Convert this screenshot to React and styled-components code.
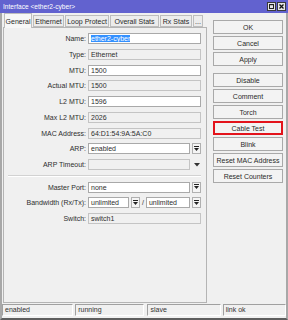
import React from 'react';
import styled, { createGlobalStyle } from 'styled-components';

const Global = createGlobalStyle`
  html, body {
    margin: 0;
    padding: 0;
    background: #f0f0f0;
  }
  body {
    font-family: 'Liberation Sans', Arial, sans-serif;
  }
`;

const Window = styled.div`
  width: 288px;
  height: 320px;
  display: flex;
  flex-direction: column;
  background: #f0f0f0;
  overflow: hidden;
`;
const TitleBar = styled.div`
  height: 13px;
  flex: none;
  background: #6262cf;
  display: flex;
  align-items: center;
  justify-content: space-between;
  padding: 0 2px 0 3px;
`;
const Title = styled.span`
  color: #fff;
  font-size: 6.6px;
`;
const WinButtons = styled.div`
  display: flex;
  gap: 1px;
`;
const WinBtn = styled.div`
  width: 9px;
  height: 9px;
  box-sizing: border-box;
  background: #e6e6e6;
  border: 1px solid #3a3a3a;
  display: flex;
  align-items: center;
  justify-content: center;
  svg {
    display: block;
  }
`;
const Frame = styled.div`
  flex: 1;
  display: flex;
  flex-direction: column;
  border-left: 2px solid #a8a8a8;
  border-right: 2px solid #a8a8a8;
  border-bottom: 2px solid #5e5e5e;
`;
const Body = styled.div`
  flex: 1;
  display: flex;
`;
const Main = styled.div`
  width: 204px;
  margin-left: 1px;
  display: flex;
  flex-direction: column;
`;
const Tabs = styled.div`
  height: 14px;
  display: flex;
  align-items: flex-end;
  gap: 1px;
  padding-left: 1px;
  position: relative;
  z-index: 1;
`;
const Tab = styled.div`
  box-sizing: border-box;
  height: ${(p) => (p.$active ? '15px' : '12px')};
  margin-bottom: ${(p) => (p.$active ? '-1px' : '0')};
  width: ${(p) => p.$w}px;
  background: ${(p) => (p.$active ? '#f7f7f7' : '#ececec')};
  border: 1px solid #bdbdbd;
  border-bottom: ${(p) => (p.$active ? 'none' : '1px solid #bdbdbd')};
  font-size: 7px;
  color: #2a2a2a;
  display: flex;
  align-items: center;
  justify-content: center;
  white-space: nowrap;
`;
const Panel = styled.div`
  flex: 1;
  box-sizing: border-box;
  border: 1px solid #b4b4b4;
  background: #f0f0f0;
  padding: 5px 5px 0 0;
`;
const Form = styled.div`
  display: grid;
  grid-template-columns: 84px 1fr;
  grid-template-rows: repeat(9, 11px) 2px repeat(3, 11px);
  row-gap: 4.75px;
`;
const Label = styled.div`
  font-size: 7px;
  color: #2e2e2e;
  text-align: right;
  padding-right: 2px;
  line-height: 11px;
  white-space: nowrap;
`;
const Field = styled.div`
  display: flex;
  align-items: center;
  gap: 2px;
  min-width: 0;
`;
const Input = styled.div`
  box-sizing: border-box;
  height: 11px;
  flex: ${(p) => (p.$w ? 'none' : '1')};
  width: ${(p) => (p.$w ? `${p.$w}px` : 'auto')};
  background: ${(p) => (p.$ro ? '#f0f0f0' : '#fff')};
  border: 1px solid ${(p) => (p.$ro ? '#c4c4c4' : '#a9a9a9')};
  font-size: 7px;
  color: #2e2e2e;
  line-height: 9px;
  padding-left: 2px;
  white-space: nowrap;
  overflow: hidden;
`;
const Selected = styled.span`
  background: #3390ff;
  color: #fff;
`;
const DropBtn = styled.div`
  box-sizing: border-box;
  flex: none;
  width: 9px;
  height: 11px;
  background: ${(p) => (p.$plain ? 'transparent' : '#f4f4f4')};
  border: 1px solid ${(p) => (p.$plain ? 'transparent' : '#b0b0b0')};
  display: flex;
  align-items: center;
  justify-content: center;
  svg {
    display: block;
  }
`;
const Slash = styled.span`
  font-size: 7px;
  color: #2e2e2e;
  flex: none;
`;
const Separator = styled.div`
  grid-column: 1 / -1;
  height: 0;
  margin-left: 4px;
  border-top: 1px solid #d2d2d2;
  border-bottom: 1px solid #fff;
`;
const Side = styled.div`
  width: 70px;
  margin-left: 6px;
  padding-top: 7px;
  display: flex;
  flex-direction: column;
  gap: 2px;
`;
const Button = styled.div`
  box-sizing: border-box;
  height: 14px;
  margin-top: ${(p) => (p.$gapBefore ? '5px' : '0')};
  background: #f3f3f3;
  border: ${(p) => (p.$highlight ? '2px solid #e3131b' : '1px solid #a9a9a9')};
  font-size: 7px;
  color: #2a2a2a;
  display: flex;
  align-items: center;
  justify-content: center;
  white-space: nowrap;
`;
const StatusBar = styled.div`
  height: 14px;
  display: flex;
  align-items: center;
  gap: 2px;
  padding-bottom: 1px;
`;
const StatusCell = styled.div`
  box-sizing: border-box;
  width: ${(p) => p.$w}px;
  height: 12px;
  border-top: 1px solid #a0a0a0;
  border-left: 1px solid #a0a0a0;
  border-bottom: 1px solid #fff;
  border-right: 1px solid #fff;
  font-size: 7px;
  color: #333;
  line-height: 10px;
  padding-left: 2px;
  margin-left: ${(p) => p.$ml || 0}px;
`;

const DropIcon = () => (
  <svg width="5" height="6" viewBox="0 0 5 6">
    <rect x="0" y="0" width="5" height="1" fill="#222" />
    <path d="M0 2 H5 L2.5 5 Z" fill="#222" />
  </svg>
);
const ArrowIcon = () => (
  <svg width="6" height="4" viewBox="0 0 6 4">
    <path d="M0 0 H6 L3 3.5 Z" fill="#333" />
  </svg>
);

const tabs = [
  ['General', 28],
  ['Ethernet', 31],
  ['Loop Protect', 44],
  ['Overall Stats', 49],
  ['Rx Stats', 32],
  ['...', 10],
];

const buttons = [
  'OK',
  'Cancel',
  'Apply',
  'Disable',
  'Comment',
  'Torch',
  'Cable Test',
  'Blink',
  'Reset MAC Address',
  'Reset Counters',
];

export default function App() {
  return (
    <>
      <Global />
      <Window>
        <TitleBar>
          <Title>Interface &lt;ether2-cyber&gt;</Title>
          <WinButtons>
            <WinBtn>
              <svg width="5" height="5" viewBox="0 0 5 5">
                <rect x="0.5" y="0.5" width="4" height="4" fill="none" stroke="#222" />
                <rect x="0" y="0" width="5" height="1.2" fill="#222" />
              </svg>
            </WinBtn>
            <WinBtn>
              <svg width="5" height="5" viewBox="0 0 5 5">
                <path d="M0.5 0.5 L4.5 4.5 M4.5 0.5 L0.5 4.5" stroke="#111" strokeWidth="1.3" />
              </svg>
            </WinBtn>
          </WinButtons>
        </TitleBar>
        <Frame>
          <Body>
            <Main>
              <Tabs>
                {tabs.map(([name, w], i) => (
                  <Tab key={name} $w={w} $active={i === 0}>
                    {name}
                  </Tab>
                ))}
              </Tabs>
              <Panel>
                <Form>
                  <Label>Name:</Label>
                  <Field>
                    <Input>
                      <Selected>ether2-cyber</Selected>
                    </Input>
                  </Field>
                  <Label>Type:</Label>
                  <Field>
                    <Input $ro>Ethernet</Input>
                  </Field>
                  <Label>MTU:</Label>
                  <Field>
                    <Input>1500</Input>
                  </Field>
                  <Label>Actual MTU:</Label>
                  <Field>
                    <Input $ro>1500</Input>
                  </Field>
                  <Label>L2 MTU:</Label>
                  <Field>
                    <Input>1596</Input>
                  </Field>
                  <Label>Max L2 MTU:</Label>
                  <Field>
                    <Input $ro>2026</Input>
                  </Field>
                  <Label>MAC Address:</Label>
                  <Field>
                    <Input $ro>64:D1:54:9A:5A:C0</Input>
                  </Field>
                  <Label>ARP:</Label>
                  <Field>
                    <Input>enabled</Input>
                    <DropBtn>
                      <DropIcon />
                    </DropBtn>
                  </Field>
                  <Label>ARP Timeout:</Label>
                  <Field>
                    <Input $ro />
                    <DropBtn $plain>
                      <ArrowIcon />
                    </DropBtn>
                  </Field>
                  <Separator />
                  <Label>Master Port:</Label>
                  <Field>
                    <Input>none</Input>
                    <DropBtn>
                      <DropIcon />
                    </DropBtn>
                  </Field>
                  <Label>Bandwidth (Rx/Tx):</Label>
                  <Field>
                    <Input $w={41}>unlimited</Input>
                    <DropBtn>
                      <DropIcon />
                    </DropBtn>
                    <Slash>/</Slash>
                    <Input>unlimited</Input>
                    <DropBtn>
                      <DropIcon />
                    </DropBtn>
                  </Field>
                  <Label>Switch:</Label>
                  <Field>
                    <Input $ro>switch1</Input>
                  </Field>
                </Form>
              </Panel>
            </Main>
            <Side>
              {buttons.map((b) => (
                <Button
                  key={b}
                  $gapBefore={b === 'Disable'}
                  $highlight={b === 'Cable Test'}
                >
                  {b}
                </Button>
              ))}
            </Side>
          </Body>
          <StatusBar>
            <StatusCell $w={72}>enabled</StatusCell>
            <StatusCell $w={70}>running</StatusCell>
            <StatusCell $w={74} $ml={1}>slave</StatusCell>
            <StatusCell $w={64}>link ok</StatusCell>
          </StatusBar>
        </Frame>
      </Window>
    </>
  );
}
